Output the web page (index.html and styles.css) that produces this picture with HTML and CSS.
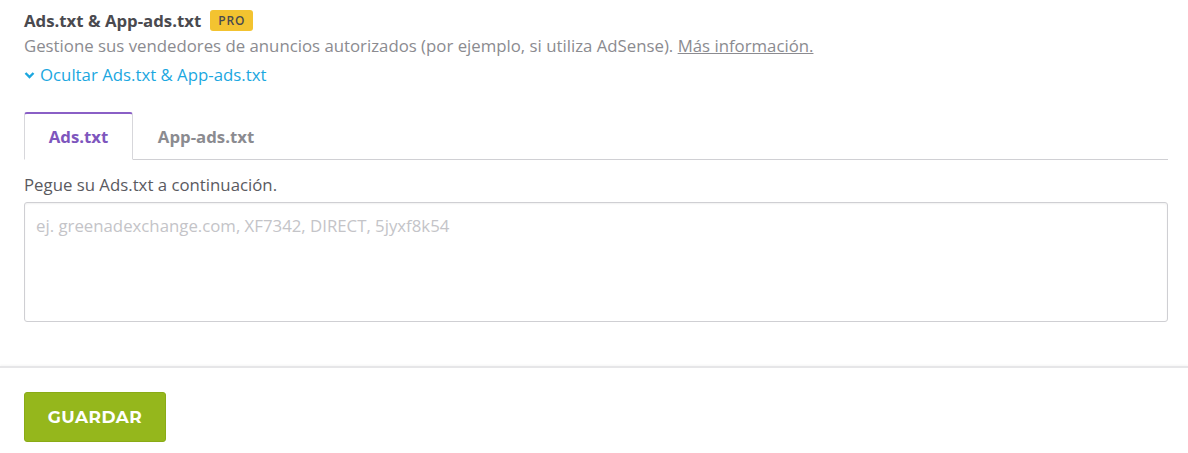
FILE: index.html
```html
<!DOCTYPE html>
<html lang="es">
<head>
<meta charset="UTF-8" />
<title>Ads.txt</title>
<link rel="stylesheet" href="styles.css">
</head>
<body>
  <div class="section">
    <div class="title-row">
      <h3>Ads.txt &amp; App-ads.txt</h3>
      <span class="badge">PRO</span>
    </div>
    <p class="desc">Gestione sus vendedores de anuncios autorizados (por ejemplo, si utiliza AdSense). <a href="#">Más información.</a></p>
    <a class="toggle" href="#">
      <svg width="11" height="10" viewBox="0 0 11 10"><path d="M1.5 3 L5.5 7 L9.5 3" fill="none" stroke="#1ba7df" stroke-width="2.4"/></svg>
      Ocultar Ads.txt &amp; App-ads.txt
    </a>

    <ul class="tabs">
      <li class="tab active">Ads.txt</li>
      <li class="tab">App-ads.txt</li>
    </ul>

    <label class="field-label" for="adstxt">Pegue su Ads.txt a continuación.</label>
    <textarea id="adstxt" placeholder="ej. greenadexchange.com, XF7342, DIRECT, 5jyxf8k54"></textarea>
  </div>

  <div class="footer">
    <button class="save">GUARDAR</button>
  </div>
</body>
</html>
```

FILE: styles.css
```css
body { margin: 0; font-family: "Open Sans", sans-serif; background: #fff; color: #4b4b50; }
.section { padding: 8px 20px 44px 24px; }
.title-row { display: flex; align-items: center; gap: 9px; height: 24px; }
h3 { margin: 0; font-size: 16.8px; font-weight: 700; color: #4a4a4f; }
.badge { background: #f3c330; color: #4a4a4f; font-size: 12px; font-weight: 600; letter-spacing: 0.8px; padding: 2px 8px; border-radius: 3px; line-height: 17px; }
.desc { margin: 2px 0 0; font-size: 16.8px; color: #8b8b90; line-height: 24px; }
.desc a { color: #8b8b90; }
.toggle { display: inline-flex; align-items: center; gap: 5px; margin-top: 6px; font-size: 16.8px; color: #1ba7df; text-decoration: none; line-height: 22px; }
.tabs { list-style: none; margin: 26px 0 0; padding: 0; display: flex; border-bottom: 1px solid #d0d0d4; }
.tab { width: 109px; display: flex; align-items: center; justify-content: center; font-size: 16.8px; font-weight: 700; color: #8b8b90; border: 1px solid transparent; border-top: 2px solid transparent; margin-bottom: -1px; box-sizing: border-box; height: 48px; }
.tab.active { color: #7e56bd; border-color: #d7d7db; border-top-color: #8a5fc6; border-bottom-color: #fff; background: #fff; border-radius: 3px 3px 0 0; }
.tab + .tab { width: 146px; }
.field-label { display: block; margin-top: 14px; font-size: 16.8px; color: #5a5a5f; line-height: 22px; }
textarea { display: block; box-sizing: border-box; width: 100%; height: 120px; margin-top: 6px; border: 1px solid #cfcfd3; border-radius: 3px; padding: 11px 11px; font-family: "Open Sans", sans-serif; font-size: 16.8px; resize: none; box-shadow: inset 0 1px 2px rgba(0,0,0,0.06); }
textarea::placeholder { color: #c4c4c8; }
.footer { border-top: 2px solid #e6e6e8; box-shadow: 0 -1px 2px rgba(0,0,0,0.04); padding: 24px 24px 20px; }
.save { background: #95b71c; color: #fff; border: 1px solid #8aab16; border-radius: 3px; width: 142px; height: 50px; font-family: "Montserrat", "Lato", sans-serif; font-weight: 700; font-size: 17px; letter-spacing: 0.5px; }
```
